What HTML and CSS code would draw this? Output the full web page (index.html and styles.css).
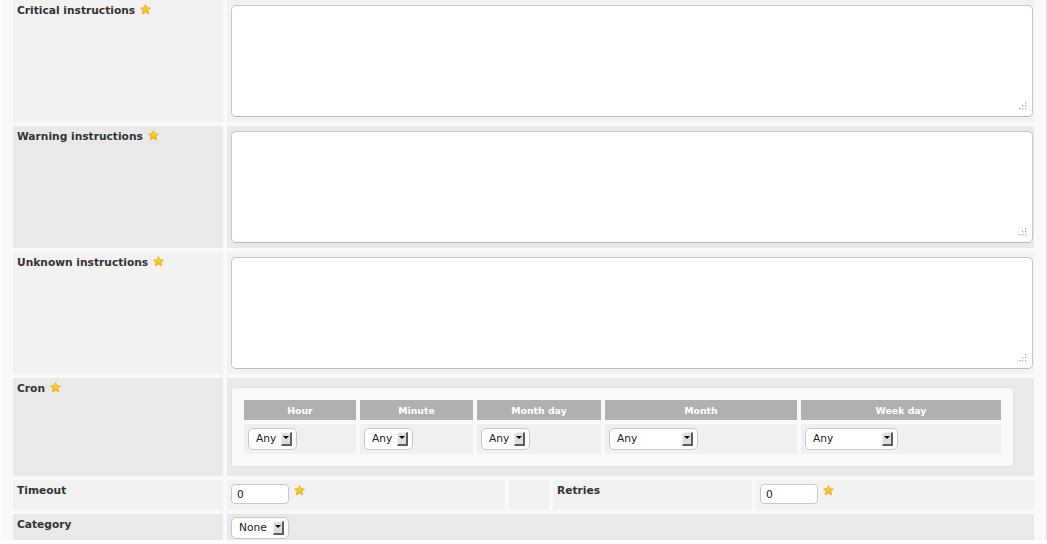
FILE: index.html
```html
<!DOCTYPE html>
<html lang="en">
<head>
  <meta charset="UTF-8">
  <title>Module setup</title>
  <link rel="stylesheet" href="styles.css">
</head>
<body>

  <div class="page">
    <table class="form">
      <colgroup>
        <col class="c-label">
        <col class="c-field">
        <col class="c-spacer">
        <col class="c-label2">
        <col class="c-field">
      </colgroup>

      <!-- Instructions -->
      <tr class="odd">
        <td class="label">Critical instructions <svg class="star" viewBox="0 0 12 12"><use href="#star"/></svg></td>
        <td class="area" colspan="4">
          <div class="area-wrap">
            <textarea></textarea>
            <svg class="grip" viewBox="0 0 9 9"><use href="#grip"/></svg>
          </div>
        </td>
      </tr>
      <tr class="even">
        <td class="label">Warning instructions <svg class="star" viewBox="0 0 12 12"><use href="#star"/></svg></td>
        <td class="area" colspan="4">
          <div class="area-wrap">
            <textarea></textarea>
            <svg class="grip" viewBox="0 0 9 9"><use href="#grip"/></svg>
          </div>
        </td>
      </tr>
      <tr class="odd">
        <td class="label">Unknown instructions <svg class="star" viewBox="0 0 12 12"><use href="#star"/></svg></td>
        <td class="area" colspan="4">
          <div class="area-wrap">
            <textarea></textarea>
            <svg class="grip" viewBox="0 0 9 9"><use href="#grip"/></svg>
          </div>
        </td>
      </tr>

      <!-- Cron -->
      <tr class="even">
        <td class="label">Cron <svg class="star" viewBox="0 0 12 12"><use href="#star"/></svg></td>
        <td class="cron-cell" colspan="4">
          <div class="cron-box">
            <table class="cron">
              <colgroup>
                <col style="width:112px"><col style="width:113px"><col style="width:124px"><col style="width:192px"><col style="width:200px">
              </colgroup>
              <tr>
                <th>Hour</th>
                <th>Minute</th>
                <th>Month day</th>
                <th>Month</th>
                <th>Week day</th>
              </tr>
              <tr>
                <td><span class="select"><select class="w-any"><option>Any</option></select><span class="arrow"></span></span></td>
                <td><span class="select"><select class="w-any"><option>Any</option></select><span class="arrow"></span></span></td>
                <td><span class="select"><select class="w-any"><option>Any</option></select><span class="arrow"></span></span></td>
                <td><span class="select"><select class="w-month"><option>Any</option></select><span class="arrow"></span></span></td>
                <td><span class="select"><select class="w-week"><option>Any</option></select><span class="arrow"></span></span></td>
              </tr>
            </table>
          </div>
        </td>
      </tr>

      <!-- Timeout / retries -->
      <tr class="odd short">
        <td class="label">Timeout</td>
        <td class="field"><input type="text" value="0"> <svg class="star" viewBox="0 0 12 12"><use href="#star"/></svg></td>
        <td></td>
        <td class="label">Retries</td>
        <td class="field"><input type="text" value="0"> <svg class="star" viewBox="0 0 12 12"><use href="#star"/></svg></td>
      </tr>

      <tr class="even short">
        <td class="label">Category</td>
        <td class="field cat" colspan="4"><span class="select"><select class="w-none"><option>None</option></select><span class="arrow"></span></span></td>
      </tr>
    </table>
  </div>

  <!-- shared symbols -->
  <svg width="0" height="0" class="defs">
    <defs>
      <linearGradient id="gold" x1="0" y1="0" x2="0" y2="1">
        <stop offset="0" stop-color="#ffe34d"/>
        <stop offset="1" stop-color="#f7b500"/>
      </linearGradient>
      <symbol id="star" viewBox="0 0 12 12">
        <polygon points="6,0.6 7.6,4.1 11.4,4.4 8.5,6.9 9.4,10.8 6,8.8 2.6,10.8 3.5,6.9 0.6,4.4 4.4,4.1" fill="url(#gold)" stroke="#e9a400" stroke-width="0.8" stroke-linejoin="round"/>
      </symbol>
      <symbol id="grip" viewBox="0 0 9 9">
        <rect x="7" y="1" width="1" height="1" fill="#9a9a9a"/>
        <rect x="7" y="4" width="1" height="1" fill="#9a9a9a"/>
        <rect x="4" y="4" width="1" height="1" fill="#9a9a9a"/>
        <rect x="7" y="7" width="1" height="1" fill="#9a9a9a"/>
        <rect x="4" y="7" width="1" height="1" fill="#9a9a9a"/>
        <rect x="1" y="7" width="1" height="1" fill="#9a9a9a"/>
        <rect x="8" y="2" width="1" height="1" fill="#d8d8d8"/>
        <rect x="8" y="5" width="1" height="1" fill="#d8d8d8"/>
        <rect x="5" y="5" width="1" height="1" fill="#d8d8d8"/>
        <rect x="8" y="8" width="1" height="1" fill="#d8d8d8"/>
        <rect x="5" y="8" width="1" height="1" fill="#d8d8d8"/>
        <rect x="2" y="8" width="1" height="1" fill="#d8d8d8"/>
      </symbol>
    </defs>
  </svg>

</body>
</html>
```

FILE: styles.css
```css
* {
  box-sizing: border-box;
}

body {
  margin: 0;
  padding-left: 3px;
  background-color: #fdfdfd;
  font-family: "DejaVu Sans", Verdana, sans-serif;
  font-size: 8pt;
  color: #333;
  overflow: hidden;
}

.page {
  background-color: #f9f9f9;
  border-right: 1px solid #dcdcdc;
  padding: 0 8px 0 6px;
  height: 544px;
}

.defs {
  position: absolute;
}

/* Main form table */
.form {
  table-layout: fixed;
  width: 1029px;
  border-spacing: 4px;
  margin-top: -4px;
}

.c-label { width: 210px; }
.c-field { width: 278px; }
.c-spacer { width: 40px; }
.c-label2 { width: 199px; }

.form > tbody > tr > td {
  vertical-align: top;
  padding: 4px;
}

.form tr.odd > td { background-color: #f2f2f2; }
.form tr.even > td { background-color: #e9e9e9; }

.label {
  font-weight: bold;
  white-space: nowrap;
}

.star {
  width: 11px;
  height: 11px;
  vertical-align: -1px;
  margin-left: 1px;
}

/* Text areas */
.form td.area {
  padding: 5px 1px 5px 4px;
}

.area-wrap {
  position: relative;
}

textarea {
  display: block;
  width: 100%;
  height: 112px;
  border: 1px solid #c6c6c6;
  border-bottom-color: #b9b9b9;
  border-radius: 5px;
  background-color: #fff;
  resize: none;
  font-family: "DejaVu Sans", sans-serif;
  font-size: 8pt;
}

.grip {
  position: absolute;
  right: 6px;
  bottom: 7px;
  width: 9px;
  height: 9px;
}

/* Cron block */
.form td.cron-cell {
  padding: 9px 4px 9px 4px;
}

.cron-box {
  width: 783px;
  background-color: #f9f9f9;
  border: 1px solid #e0e0e0;
  border-radius: 4px;
  padding: 8px;
}

.cron {
  table-layout: fixed;
  border-spacing: 4px;
  width: 765px;
}

.cron th {
  background-color: #b0b0b0;
  color: #fff;
  font-weight: bold;
  font-size: 7pt;
  height: 20px;
  padding: 0;
  text-align: center;
}

.cron td {
  background-color: #f0f0f0;
  height: 30px;
  padding: 4px;
  vertical-align: top;
}

/* Select boxes with the old-style arrow button */
.select {
  position: relative;
  display: inline-block;
  vertical-align: top;
}

.select select {
  display: block;
  appearance: none;
  -webkit-appearance: none;
  height: 22px;
  border: 1px solid #c8c8c8;
  border-radius: 5px;
  background-color: #fff;
  padding: 0 0 2px 7px;
  font-family: "DejaVu Sans", sans-serif;
  font-size: 8pt;
  color: #222;
}

.w-any { width: 49px; }
.w-month { width: 89px; }
.w-week { width: 93px; }
.w-none { width: 58px; }

.arrow {
  position: absolute;
  right: 5px;
  top: 4px;
  width: 11px;
  height: 14px;
  background-color: #dedede;
  border-top: 1px solid #f4f4f4;
  border-left: 1px solid #f4f4f4;
  border-right: 2px solid #5c5c5c;
  border-bottom: 2px solid #5c5c5c;
  pointer-events: none;
}

.arrow::after {
  content: "";
  position: absolute;
  left: 1px;
  top: 3px;
  border-left: 3px solid transparent;
  border-right: 3px solid transparent;
  border-top: 3px solid #000;
}

/* Short rows */
.form tr.short > td {
  height: 30px;
}

.form td.field {
  padding: 4px;
  white-space: nowrap;
}

.form td.cat {
  padding-top: 3px;
}

input[type="text"] {
  width: 58px;
  height: 20px;
  border: 1px solid #c8c8c8;
  border-radius: 4px;
  padding: 0 5px;
  font-family: "DejaVu Sans", sans-serif;
  font-size: 8pt;
  color: #222;
  vertical-align: top;
}

.field .star {
  vertical-align: top;
  margin-left: 2px;
  margin-top: 1px;
}
```
